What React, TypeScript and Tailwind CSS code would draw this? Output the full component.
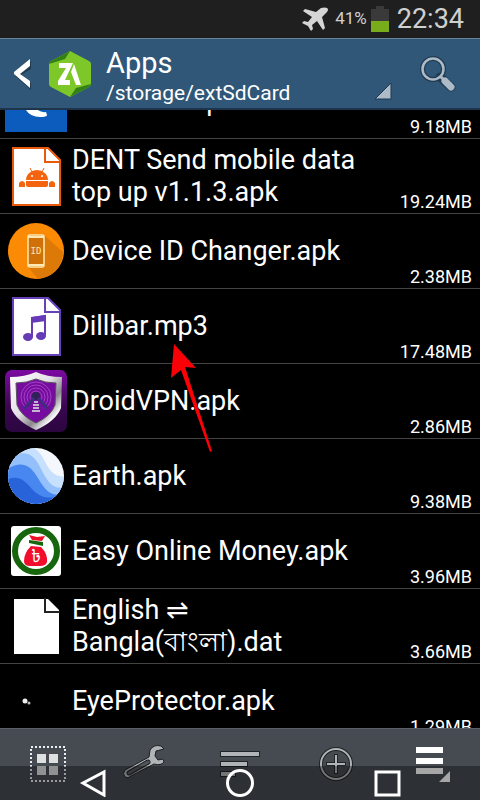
import type { ReactNode } from "react";

const DocIcon = ({ color, children }: { color: string; children?: ReactNode }) => (
  <svg viewBox="0 0 64 62" className="h-[62px] w-16" aria-hidden="true">
    <path d="M9 3H44L56 15V60H9Z" fill="#fff" stroke={color} strokeWidth="2" />
    <path d="M41 3V17H56" fill="none" stroke={color} strokeWidth="2" />
    {children}
  </svg>
);

const CoinbaseIcon = () => (
  <svg viewBox="0 0 64 62" className="h-[62px] w-16" aria-hidden="true">
    <path d="M1 0H63V62H1Z" fill="#0b5cbc" />
    <path d="M20 36Q24 47 36 47Q43 47 43 45L42 42Q35 43 30 36Z" fill="#fff" />
  </svg>
);

const ApkIcon = () => (
  <DocIcon color="#e8590c">
    <path d="M22 35a11 10 0 0 1 22 0Z" fill="#f4640f" />
    <path d="M28 27l-2-4M38 27l2-4" stroke="#f4640f" strokeWidth="1" />
    <circle cx="28" cy="31" r="1" fill="#fff" />
    <circle cx="38" cy="31" r="1" fill="#fff" />
    <path d="M22 36H44V40Q44 42 42 42H24Q22 42 22 40ZM15 42V38Q18 34 21 38V42ZM45 42V38Q48 34 51 38V42Z" fill="#f4640f" />
  </DocIcon>
);

const DeviceIcon = () => (
  <svg viewBox="0 0 64 62" className="h-[62px] w-16" aria-hidden="true">
    <circle cx="32" cy="31" r="28" fill="#fb8a05" />
    <path d="M41 16L59 32Q57 56 34 59L24 47Z" fill="#dd7906" />
    <rect x="24" y="15" width="16" height="32" rx="2" fill="#cf7108" stroke="#ffe7b0" strokeWidth="1.500" />
    <path d="M24 17H40M24 45H40" stroke="#ffe7b0" strokeWidth="2" />
    <text x="32" y="34" textAnchor="middle" fontSize="9" fill="#ffe7b0" className="font-['DejaVu_Sans_Mono',monospace]">
      ID
    </text>
  </svg>
);

const MusicIcon = () => (
  <DocIcon color="#6741b8">
    <path d="M28 42V23L41 21V40" fill="none" stroke="#673ab7" strokeWidth="2" />
    <path d="M27 22L42 20V26L27 28Z" fill="#673ab7" />
    <ellipse cx="24" cy="42" rx="5" ry="4" fill="#673ab7" />
    <ellipse cx="37" cy="41" rx="5" ry="4" fill="#673ab7" />
  </DocIcon>
);

const VpnIcon = () => (
  <svg viewBox="0 0 64 62" className="h-[62px] w-16" aria-hidden="true">
    <defs>
      <linearGradient id="vpn-bg" x2="0" y2="1">
        <stop stopColor="#7d0aa3" />
        <stop offset=".6" stopColor="#3a0650" />
        <stop offset="1" stopColor="#2b0640" />
      </linearGradient>
      <linearGradient id="vpn-rim" x2="1" y2="1">
        <stop stopColor="#fff" />
        <stop offset=".45" stopColor="#e4e1e6" />
        <stop offset=".65" stopColor="#8b878e" />
        <stop offset=".8" stopColor="#f5f5f5" />
        <stop offset="1" stopColor="#f5f5f5" />
      </linearGradient>
    </defs>
    <rect x="1" width="62" height="62" rx="7" fill="url(#vpn-bg)" />
    <path d="M32 2Q43 7 58 7L57 38Q52 51 32 60Q12 51 7 38L6 7Q21 7 32 2Z" fill="url(#vpn-rim)" />
    <path d="M32 9Q41 13 52 13L51 35Q47 46 32 53Q17 46 13 35L12 13Q23 13 32 9Z" fill="#760d9e" stroke="#58505e" strokeWidth="1" />
    <g fill="none" stroke="#a440c6" strokeWidth="1">
      <circle cx="32" cy="27" r="6" />
      <circle cx="32" cy="27" r="9" />
      <circle cx="32" cy="27" r="12" />
      <circle cx="32" cy="27" r="15" />
    </g>
    <path d="M29 29L19 41Q26 48 32 51Q38 48 45 41L35 29Z" fill="#760d9e" />
    <circle cx="32" cy="26" r="4" fill="#2d2357" />
    <path d="M30 28L20 39M34 28L44 39" stroke="#3c2c80" strokeWidth="3" />
    <path d="M30 32H34M29 35H35M29 38H35M28 41H36" stroke="#c3b4d0" strokeWidth="2" />
  </svg>
);

const EarthIcon = () => (
  <svg viewBox="0 0 64 62" className="h-[62px] w-16" aria-hidden="true">
    <clipPath id="globe">
      <circle cx="32" cy="31" r="28" />
    </clipPath>
    <g clipPath="url(#globe)">
      <path d="M0 0H64V62H0Z" fill="#f4f7fb" />
      <path d="M0 0H22C40 4 40 20 48 27Q54 33 64 31V62H0Z" fill="#c7e0fd" />
      <path d="M0 14C22 3 30 9 37 24C45 40 51 46 64 41V62H0Z" fill="#93bffb" />
      <path d="M0 26C15 16 24 18 32 30C40 43 46 54 60 48V62H0Z" fill="#4787ef" />
      <path d="M0 36C13 29 20 34 27 43C34 51 42 55 56 51V62H0Z" fill="#2963d9" />
    </g>
  </svg>
);

const MoneyIcon = () => (
  <svg viewBox="0 0 64 62" className="h-[62px] w-16" aria-hidden="true">
    <rect x="7" y="6" width="50" height="50" rx="3" fill="#fff" />
    <circle cx="32" cy="31" r="21" fill="#fff" stroke="#17650d" strokeWidth="6" />
    <path d="M25 15L33 17L41 16L38 21L28 20Z" fill="#ee1025" />
    <path d="M25 20L39 22V26L25 23Z" fill="#17650d" />
    <path d="M27 26L37 27Q44 34 43 42Q42 46 36 46H26Q20 46 20 41Q20 33 27 26Z" fill="#f20d2c" />
    <text x="32" y="42" textAnchor="middle" fontSize="17" fill="#fff" className="font-['Noto_Sans','Noto_Sans_Bengali',sans-serif]">
      ৳
    </text>
  </svg>
);

const DatIcon = () => (
  <svg viewBox="0 0 64 62" className="h-[62px] w-16" aria-hidden="true">
    <path d="M10 4H44L55 15V59H10Z" fill="#fff" />
    <path d="M41 3V17H56" fill="none" stroke="#222" strokeWidth="2" />
  </svg>
);

const EyeIcon = () => (
  <svg viewBox="0 0 64 62" className="h-[62px] w-16" aria-hidden="true">
    <circle cx="21" cy="31" r="2.500" fill="#eee" />
    <circle cx="25" cy="33" r="1.500" fill="#bbb" />
  </svg>
);

const files = [
  { name: "Coinbase.apk", size: "9.18MB", icon: <CoinbaseIcon /> },
  { name: "DENT Send mobile data top up v1.1.3.apk", size: "19.24MB", icon: <ApkIcon /> },
  { name: "Device ID Changer.apk", size: "2.38MB", icon: <DeviceIcon /> },
  { name: "Dillbar.mp3", size: "17.48MB", icon: <MusicIcon /> },
  { name: "DroidVPN.apk", size: "2.86MB", icon: <VpnIcon /> },
  { name: "Earth.apk", size: "9.38MB", icon: <EarthIcon /> },
  { name: "Easy Online Money.apk", size: "3.96MB", icon: <MoneyIcon /> },
  { name: "English ⇌ Bangla(বাংলা).dat", size: "3.66MB", icon: <DatIcon /> },
  { name: "EyeProtector.apk", size: "1.29MB", icon: <EyeIcon /> },
];

const StatusBar = () => (
  <div className="flex h-[38px] shrink-0 items-center justify-end bg-[#1f1f1f] pr-4 text-[#d0d0d0]">
    <svg viewBox="0 0 28 24" className="h-6 w-7" aria-label="Airplane mode">
      <path
        d="M26 1Q28 2 26 5L21 10L24 21L22 23L16 14L11 18L12 22L10 24L7 19L1 16L3 14L7 15L11 10L2 4L4 2L15 5L20 1Q24 0 26 1Z"
        fill="#d6d6d6"
      />
    </svg>
    <span className="ml-1.5 text-[17px]">41%</span>
    <svg viewBox="0 0 18 26" className="ml-1 h-[26px] w-[18px]" aria-label="Battery">
      <path d="M5 0H13V3H18V15H0V3H5Z" fill="#3a3a3a" />
      <path d="M0 15H18V26H0Z" fill="#78ac1b" />
    </svg>
    <span className="ml-2 text-[27px]">22:34</span>
  </div>
);

const Header = () => (
  <header className="flex h-[72px] shrink-0 items-center border-t border-b-2 border-t-[#688493] border-b-[#1d354c] bg-[#305778] text-white">
    <button className="ml-3 flex h-full w-9 items-center" aria-label="Back">
      <svg viewBox="0 0 20 32" className="h-8 w-5">
        <path d="M19 3V11L9 17L19 25V32L3 18V16Z" fill="#203a50" />
        <path d="M18 1V8L8 16L18 23V30L2 16V14Z" fill="#fff" />
      </svg>
    </button>
    <svg viewBox="0 0 44 48" className="h-12 w-11" aria-label="ZArchiver">
      <path d="M22 1L41 11Q43 12 43 14V34Q43 36 41 37L22 47L3 37Q1 36 1 34V14Q1 12 3 11Z" fill="#7ec728" />
      <path d="M1 14Q1 12 3 11L22 1L17 9ZM43 34Q43 36 41 37L22 47L28 38Z" fill="#338016" />
      <path d="M11 13H25L17 30H22V35H10V31L18 18H11ZM26 14L33 35H28L23 22Z" fill="#fff" />
    </svg>
    <button className="relative ml-3.5 h-full flex-1 pt-1.5 text-left">
      <span className="block text-[29px] leading-8">Apps</span>
      <span className="block text-[21px] leading-7">/storage/extSdCard</span>
      <svg viewBox="0 0 18 18" className="absolute right-0 bottom-2 size-[18px]" aria-hidden="true">
        <path d="M17 1V17H1Z" fill="#adbac8" stroke="#1d3850" strokeWidth="1" />
      </svg>
    </button>
    <button className="mr-6 ml-7 h-full" aria-label="Search">
      <svg viewBox="0 0 36 36" className="size-9">
        <circle cx="13" cy="13" r="10.500" fill="none" stroke="#203a50" strokeWidth="5" />
        <path d="M20 21L31 31" stroke="#203a50" strokeWidth="9" strokeLinecap="round" />
        <circle cx="13" cy="13" r="10.500" fill="none" stroke="#adbac8" strokeWidth="2.500" />
        <path d="M20 20L25 25" stroke="#adbac8" strokeWidth="3" />
        <path d="M25 25L31 31" stroke="#adbac8" strokeWidth="7" strokeLinecap="round" />
      </svg>
    </button>
  </header>
);

const FileList = () => (
  <main className="min-h-0 flex-1 overflow-hidden">
    <ul className="-mt-[46px]">
      {files.map((file) => (
        <li key={file.name} className="flex h-[75px] items-center border-b border-[#434343] pl-1 text-white">
          {file.icon}
          <span className="ml-1 w-[310px] text-[27px] leading-8">{file.name}</span>
          <span className="ml-auto self-end pr-2 text-[18px] leading-[22px]">{file.size}</span>
        </li>
      ))}
    </ul>
  </main>
);

const Toolbar = () => (
  <footer className="relative h-[72px] shrink-0 border-t border-[#58616a] bg-[#454b51]">
    <div className="flex h-full items-center">
      <button className="flex h-full flex-1 justify-center pt-4" aria-label="Select">
        <svg viewBox="0 0 36 38" className="h-[38px] w-9">
          <path d="M1 2H35V36H1Z" fill="none" stroke="#eee" strokeWidth="2" strokeDasharray="2 2" />
          <path d="M7 9H16V18H7ZM19 9H28V18H19ZM7 21H16V30H7ZM19 21H28V30H19Z" fill="#dedfe1" />
        </svg>
      </button>
      <button className="flex h-full flex-1 justify-center pt-4" aria-label="Settings">
        <svg viewBox="0 0 44 36" className="h-9 w-11">
          <path
            d="M42 4L39 1Q32 -1 28 5L27 12L3 25Q0 29 3 32Q6 34 9 31L32 19Q39 21 42 17L41 14L36 15L33 11L34 6Z"
            fill="#b1b4b7"
            stroke="#1c2023"
            strokeWidth="1"
          />
          <path d="M7 28L26 17" stroke="#1c2023" strokeWidth="5" strokeLinecap="round" />
          <path d="M7 28L26 17" stroke="#53575b" strokeWidth="3" strokeLinecap="round" />
        </svg>
      </button>
      <button className="flex h-full flex-1 justify-center pt-5" aria-label="Sort">
        <svg viewBox="0 0 42 30" className="h-[30px] w-[42px]">
          <path d="M1 2H41V8H1ZM1 12H29V18H1ZM1 22H17V28H1Z" fill="#202427" />
          <path d="M2 3H40V7H2ZM2 13H28V17H2ZM2 23H16V27H2Z" fill="#b1b4b7" />
        </svg>
      </button>
      <button className="flex h-full flex-1 justify-center pt-[18px]" aria-label="Add">
        <svg viewBox="0 0 36 36" className="size-9" fill="none">
          <circle cx="18" cy="17" r="15" stroke="#202427" strokeWidth="4" />
          <path d="M18 7V27M8 17H28" stroke="#202427" strokeWidth="4" />
          <circle cx="18" cy="17" r="15" stroke="#b1b4b7" strokeWidth="2" />
          <path d="M18 8V26M9 17H27" stroke="#b1b4b7" strokeWidth="2" />
        </svg>
      </button>
      <button className="flex h-full flex-1 justify-center pt-[18px]" aria-label="Menu">
        <svg viewBox="0 0 36 36" className="size-9">
          <path d="M2 0H29V6H2ZM2 11H29V17H2ZM2 21H29V27H2ZM36 24V35H25Z" fill="#fff" />
        </svg>
      </button>
    </div>
    <nav className="absolute inset-x-0 bottom-0 flex h-[34px] items-center justify-around bg-black/35 px-5">
      <button aria-label="System back">
        <svg viewBox="0 0 28 28" className="size-7">
          <path d="M25 3V26L4 14Z" fill="none" stroke="#fff" strokeWidth="3" />
        </svg>
      </button>
      <button aria-label="Home">
        <svg viewBox="0 0 28 28" className="size-7">
          <circle cx="14" cy="14" r="12.500" fill="none" stroke="#fff" strokeWidth="3" />
        </svg>
      </button>
      <button aria-label="Recent apps">
        <svg viewBox="0 0 28 28" className="size-7">
          <path d="M3 3H26V26H3Z" fill="none" stroke="#fff" strokeWidth="3" />
        </svg>
      </button>
    </nav>
  </footer>
);

const App = () => (
  <div className="relative flex h-screen flex-col bg-black font-['Roboto','Noto_Sans','DejaVu_Sans',sans-serif]">
    <StatusBar />
    <Header />
    <FileList />
    <Toolbar />
    <svg viewBox="0 0 42 110" className="pointer-events-none absolute top-[344px] left-[170px] h-[110px] w-[42px]" aria-hidden="true">
      <path d="M4 0L26 24L15 23L42 107L40 108L11 26L1 34Z" fill="#fb0007" />
    </svg>
  </div>
);

export default App;
